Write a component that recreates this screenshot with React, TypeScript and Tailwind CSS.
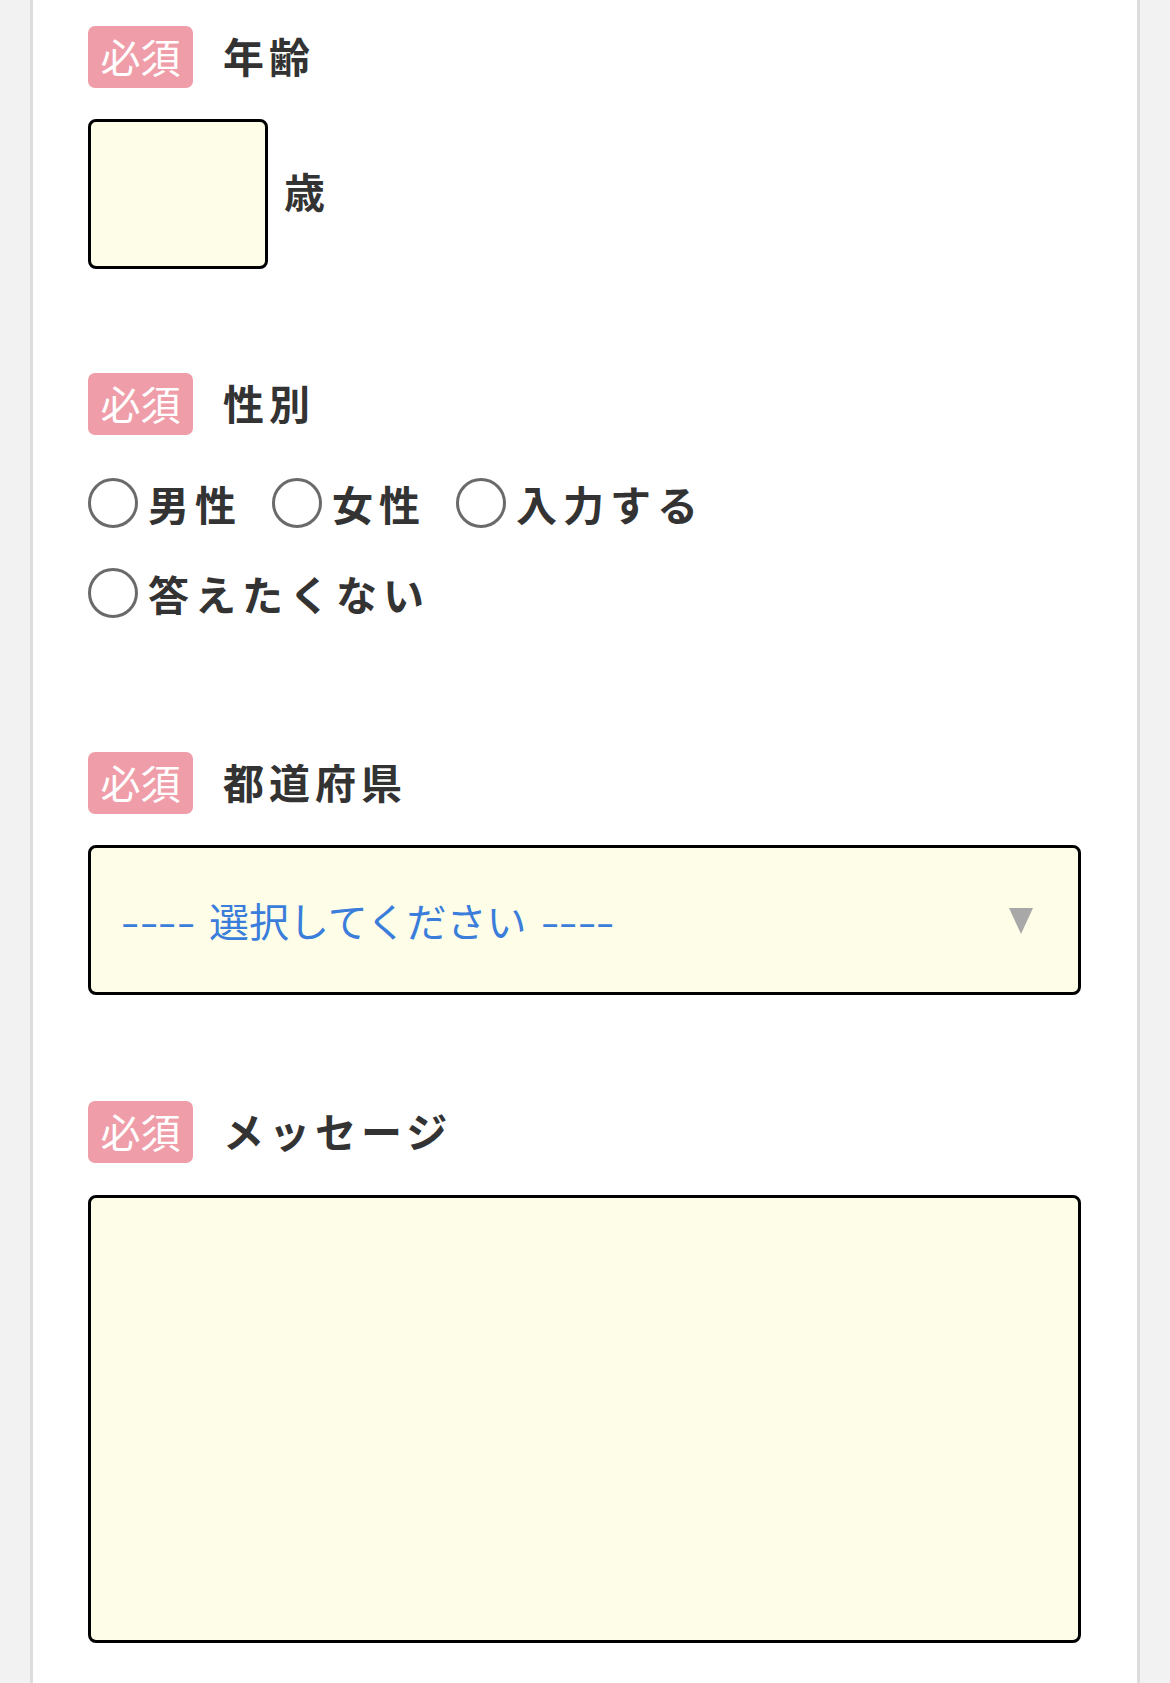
import React from "react";

const font = { fontFamily: '"Noto Sans CJK JP", "Noto Sans", sans-serif' };

function Badge() {
  return (
    <span className="flex h-[62px] w-[105px] shrink-0 items-center justify-center rounded-[7px] bg-[#ef9ea9] pb-[2px] text-[40px] font-normal leading-none text-white">
      必須
    </span>
  );
}

function Label({ text }: { text: string }) {
  return (
    <div className="flex items-center gap-[30px]">
      <Badge />
      <span className="-mt-[4px] text-[41px] font-bold leading-none tracking-[5px] text-[#333333]">{text}</span>
    </div>
  );
}

function Radio({ text }: { text: string }) {
  return (
    <label className="flex h-[50px] items-center gap-[10px]">
      <span className="h-[50px] w-[50px] shrink-0 rounded-full border-[3px] border-[#6a6a6a] bg-white" />
      <span className="text-[41px] font-bold leading-none tracking-[6px] text-[#333333]">{text}</span>
    </label>
  );
}

function Dashes() {
  return (
    <span className="inline-flex">
      <span className="inline-block w-[18.5px] scale-x-[1.35] text-center">-</span>
      <span className="inline-block w-[18.5px] scale-x-[1.35] text-center">-</span>
      <span className="inline-block w-[18.5px] scale-x-[1.35] text-center">-</span>
      <span className="inline-block w-[18.5px] scale-x-[1.35] text-center">-</span>
    </span>
  );
}

export default function App() {
  return (
    <div className="min-h-screen w-full bg-[#f2f2f2]" style={font}>
      <div className="ml-[30px] min-h-screen w-[1110px] border-x-[3px] border-[#dddddd] bg-white pl-[55px] pr-[56px] pt-[26px] pb-[60px]">
        {/* 年齢 */}
        <Label text="年齢" />
        <div className="mt-[31px] flex items-center gap-[16px]">
          <div className="h-[150px] w-[180px] rounded-[8px] border-[3px] border-black bg-[#fefee8]" />
          <span className="-mt-[8px] text-[41px] font-bold leading-none text-[#333333]">歳</span>
        </div>

        {/* 性別 */}
        <div className="mt-[104px]">
          <Label text="性別" />
        </div>
        <div className="mt-[43px] flex w-[720px] flex-wrap gap-x-[30px] gap-y-[40px]">
          <Radio text="男性" />
          <Radio text="女性" />
          <Radio text="入力する" />
          <Radio text="答えたくない" />
        </div>

        {/* 都道府県 */}
        <div className="mt-[134px]">
          <Label text="都道府県" />
        </div>
        <div className="mt-[31px] flex h-[150px] w-full items-center justify-between rounded-[8px] border-[3px] border-black bg-[#fefee8] pl-[30px] pr-[45px]">
          <span className="flex items-center text-[40px] leading-none text-[#3a7ddb]">
            <Dashes />
            <span className="ml-[14px]">選択してください</span>
            <span className="ml-[14px]">
              <Dashes />
            </span>
          </span>
          <svg width="24" height="26" viewBox="0 0 24 26" className="mt-[2px]">
            <polygon points="0,0 24,0 12,26" fill="#a8a8a8" />
          </svg>
        </div>

        {/* メッセージ */}
        <div className="mt-[106px]">
          <Label text="メッセージ" />
        </div>
        <div className="mt-[32px] h-[448px] w-full rounded-[8px] border-[3px] border-black bg-[#fefee8]" />
      </div>
    </div>
  );
}
